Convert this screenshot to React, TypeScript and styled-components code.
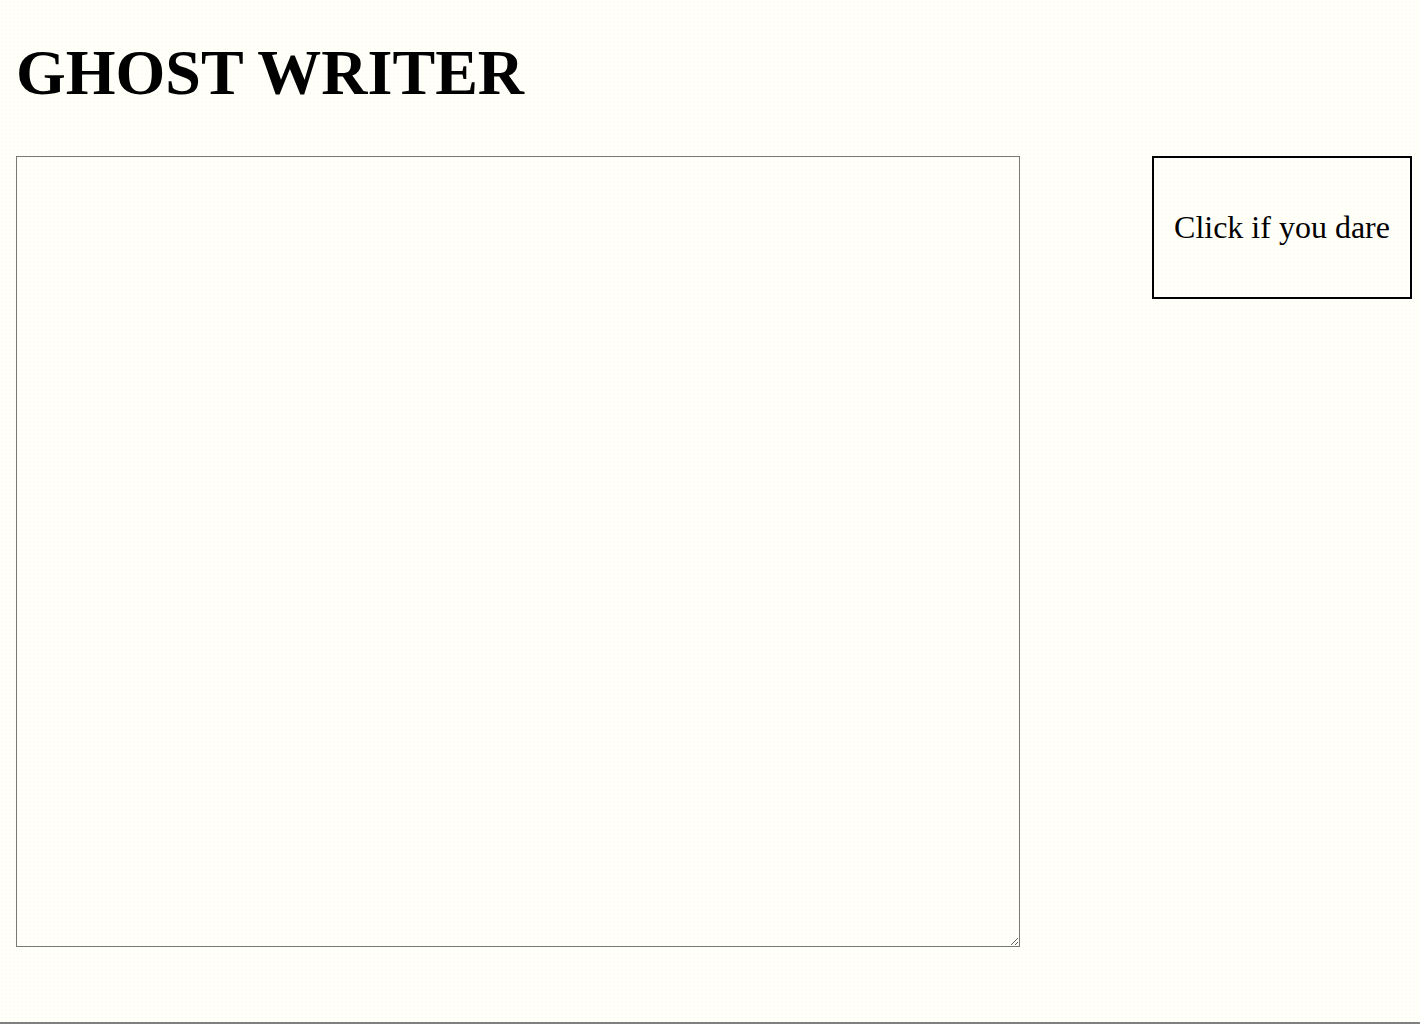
import React from "react";
import styled, { createGlobalStyle } from "styled-components";

const Global = createGlobalStyle`
  html, body {
    margin: 0;
    padding: 0;
    background-color: #fffffc;
    background-image: radial-gradient(circle, rgba(255, 245, 140, 0.45) 0.5px, transparent 0.8px);
    background-size: 4px 4px;
  }
  #root {
    min-height: 1024px;
  }
`;

const Page = styled.div`
  box-sizing: border-box;
  min-height: 1024px;
  display: flex;
  flex-direction: column;
  padding: 37px 8px 0 16px;
  font-family: "Liberation Serif", "Times New Roman", serif;
  color: #000;
`;

const Title = styled.h1`
  margin: 0 0 47px 0;
  font-size: 64px;
  line-height: 72px;
  font-weight: 700;
`;

const Workspace = styled.div`
  display: flex;
  justify-content: space-between;
  align-items: flex-start;
`;

const Editor = styled.textarea`
  box-sizing: border-box;
  width: 1004px;
  height: 791px;
  margin: 0;
  border: 1px solid #7a7a74;
  background: transparent;
  font-family: "Liberation Mono", monospace;
  font-size: 13px;
  outline: none;
`;

const DareButton = styled.button`
  box-sizing: border-box;
  width: 260px;
  height: 143px;
  margin: 0;
  border: 2px solid #000;
  background: transparent;
  font-family: "Liberation Serif", "Times New Roman", serif;
  font-size: 32px;
  color: #000;
  cursor: pointer;
  padding: 0;
`;

const Footer = styled.div`
  margin-top: auto;
  margin-left: -16px;
  margin-right: -8px;
  height: 0;
  border-top: 2px solid #808080;
`;

export default function App() {
  return (
    <>
      <Global />
      <Page>
        <Title>GHOST WRITER</Title>
        <Workspace>
          <Editor />
          <DareButton>Click if you dare</DareButton>
        </Workspace>
        <Footer />
      </Page>
    </>
  );
}
